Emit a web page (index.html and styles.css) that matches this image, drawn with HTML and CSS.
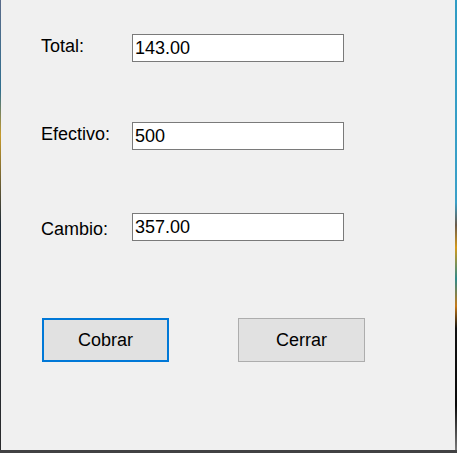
FILE: index.html
```html
<!DOCTYPE html>
<html lang="es">
<head>
    <meta charset="UTF-8">
    <meta name="viewport" content="width=device-width, initial-scale=1.0">
    <title>Cobrar</title>
    <link rel="stylesheet" href="styles.css">
</head>
<body>
    <div class="desktop">
        <div class="edge-left"></div>
        <form class="pay-form" id="payForm">
            <div class="field-row row-total">
                <label for="total" class="field-label">Total:</label>
                <input type="text" id="total" class="field-box" value="143.00">
            </div>

            <div class="field-row row-cash">
                <label for="efectivo" class="field-label">Efectivo:</label>
                <input type="text" id="efectivo" class="field-box" value="500">
            </div>

            <div class="field-row row-change">
                <label for="cambio" class="field-label">Cambio:</label>
                <input type="text" id="cambio" class="field-box" value="357.00">
            </div>

            <div class="button-row">
                <button type="button" class="win-button is-default">Cobrar</button>
                <button type="button" class="win-button">Cerrar</button>
            </div>
        </form>
        <div class="edge-right"></div>
    </div>
    <div class="edge-bottom"></div>
</body>
</html>
```

FILE: styles.css
```css
body {
    margin: 0;
    padding: 0;
    width: 457px;
    height: 453px;
    overflow: hidden;
    background-color: #3b3b3d;
    font-family: "Liberation Sans", Arial, sans-serif;
}

.desktop {
    display: flex;
    height: 450px;
}

.edge-left {
    width: 1px;
    background: linear-gradient(#5a6b8a, #2f6f8f 20%, #c79a2a 30%, #1d2b3a 50%, #2a2a2c);
}

.edge-right {
    width: 2px;
    background: linear-gradient(#2f9cc4, #3aa0c8 45%, #6b5a4a 50%, #d49a1c 55%, #2f8a8a 62%, #c67a18 68%, #111 73%, #0a0a0a 90%, #7a7a7a);
}

.edge-bottom {
    height: 3px;
    background-color: #414143;
}

.pay-form {
    width: 454px;
    height: 450px;
    box-sizing: border-box;
    padding: 34px 0 0 40px;
    background-color: #f0f0f0;
}

.field-row {
    display: grid;
    grid-template-columns: 91px 212px;
    align-items: start;
}

.row-cash {
    margin-top: 60px;
}

.row-change {
    margin-top: 63px;
}

.field-label {
    font-size: 18px;
    line-height: 20px;
    color: #000;
}

.row-total .field-label {
    margin-top: 2px;
}

.row-cash .field-label {
    margin-top: 2px;
}

.row-change .field-label {
    margin-top: 6px;
}

.field-box {
    width: 212px;
    height: 28px;
    box-sizing: border-box;
    margin: 0;
    padding: 0 2px;
    border: 1px solid #7a7a7a;
    background-color: #fff;
    font-family: "Liberation Sans", Arial, sans-serif;
    font-size: 18px;
    color: #000;
    outline: none;
}

.button-row {
    display: flex;
    gap: 69px;
    margin-top: 77px;
    padding-left: 1px;
}

.win-button {
    width: 127px;
    height: 44px;
    box-sizing: border-box;
    margin: 0;
    padding: 0;
    border: 1px solid #adadad;
    background-color: #e1e1e1;
    font-family: "Liberation Sans", Arial, sans-serif;
    font-size: 18px;
    color: #000;
    cursor: pointer;
}

.win-button.is-default {
    border: 2px solid #0078d7;
}
```
